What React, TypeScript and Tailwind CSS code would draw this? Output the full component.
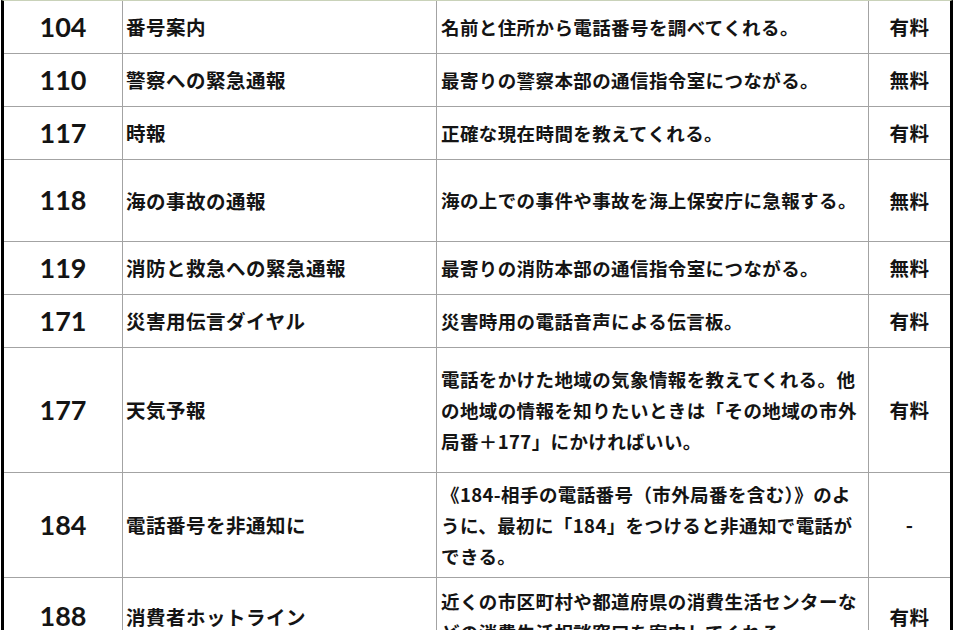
import React from "react";

type Row = { num: string; name: string; desc: React.ReactNode; fee: string; h: string };

const rows: Row[] = [
  { num: "104", name: "番号案内", desc: "名前と住所から電話番号を調べてくれる。", fee: "有料", h: "h-[53px]" },
  { num: "110", name: "警察への緊急通報", desc: "最寄りの警察本部の通信指令室につながる。", fee: "無料", h: "h-[53px]" },
  { num: "117", name: "時報", desc: "正確な現在時間を教えてくれる。", fee: "有料", h: "h-[53px]" },
  { num: "118", name: "海の事故の通報", desc: "海の上での事件や事故を海上保安庁に急報する。", fee: "無料", h: "h-[82px]" },
  { num: "119", name: "消防と救急への緊急通報", desc: "最寄りの消防本部の通信指令室につながる。", fee: "無料", h: "h-[53px]" },
  { num: "171", name: "災害用伝言ダイヤル", desc: "災害時用の電話音声による伝言板。", fee: "有料", h: "h-[53px]" },
  {
    num: "177",
    name: "天気予報",
    desc: (
      <>
        電話をかけた地域の気象情報を教えてくれる。他
        <br />
        の地域の情報を知りたいときは「その地域の市外
        <br />
        局番＋177」にかければいい。
      </>
    ),
    fee: "有料",
    h: "h-[125px]",
  },
  {
    num: "184",
    name: "電話番号を非通知に",
    desc: (
      <>
        《184-相手の電話番号（市外局番を含む）》のよ
        <br />
        うに、最初に「184」をつけると非通知で電話が
        <br />
        できる。
      </>
    ),
    fee: "-",
    h: "h-[105px]",
  },
  {
    num: "188",
    name: "消費者ホットライン",
    desc: (
      <>
        近くの市区町村や都道府県の消費生活センターな
        <br />
        どの消費生活相談窓口を案内してくれる。
      </>
    ),
    fee: "有料",
    h: "h-[78px]",
  },
];

export default function App() {
  return (
    <div className="w-[954px] h-[630px] overflow-hidden bg-white">
      <div className="ml-[1px] w-[952px] border-l-[3px] border-r-[3px] border-black border-t border-t-[#c9d2b9] text-[#141414] font-['Noto_Sans_CJK_JP','Noto_Sans',sans-serif]">
        {rows.map((r, i) => (
          <div
            key={i}
            className={`grid grid-cols-[119px_314px_432px_81px] border-b border-[#a3a3a3] ${r.h}`}
          >
            <div className="flex items-center justify-center border-r border-[#a3a3a3] text-[27px] font-bold font-['Lato','Open_Sans',sans-serif]">
              {r.num}
            </div>
            <div className="flex items-center border-r border-[#a3a3a3] pl-[3px] text-[19.5px] font-bold tracking-[0.5px] whitespace-nowrap">
              {r.name}
            </div>
            <div className="flex items-center border-r border-[#a3a3a3] pl-[4px] text-[18.5px] leading-[31px] font-bold tracking-[0.4px] whitespace-nowrap">
              <div>{r.desc}</div>
            </div>
            <div className="flex items-center justify-center text-[19.5px] font-bold tracking-[0.5px]">
              {r.fee}
            </div>
          </div>
        ))}
      </div>
    </div>
  );
}
